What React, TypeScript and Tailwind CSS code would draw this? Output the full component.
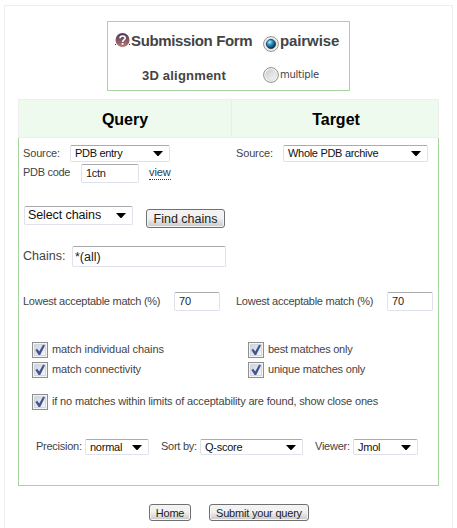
import React from "react";

type BoxProps = { className?: string; children?: React.ReactNode };

const frame = "border border-[#dfe2ec] border-t-[#a9abb0] rounded-[2px] bg-white shrink-0";

function Label({ className = "", children }: BoxProps) {
  return (
    <span className={`block shrink-0 whitespace-nowrap text-[11px] leading-[14px] text-[#444] ${className}`}>
      {children}
    </span>
  );
}

function Select({ className = "", children }: BoxProps) {
  return (
    <div className={`${frame} flex items-center justify-between pl-1 pr-[6px] whitespace-nowrap text-[#111] ${className}`}>
      <span>{children}</span>
      <svg width="10" height="5" viewBox="0 0 10 5" className="block">
        <path d="M0 0H10L5.5 5H4.5Z" fill="#000" />
      </svg>
    </div>
  );
}

function Field({ className = "", children }: BoxProps) {
  return <div className={`${frame} flex items-center pl-1 text-[#222] whitespace-nowrap ${className}`}>{children}</div>;
}

function Button({ className = "", children }: BoxProps) {
  return (
    <button
      className={`flex shrink-0 items-center justify-center whitespace-nowrap rounded-[3px] border border-[#707070] bg-linear-to-b from-[#f2f2f2] from-45% to-[#cfcfcf] to-90% pt-px text-[#222] shadow-[inset_0_0_0_1px_#f5f5f5] ${className}`}
    >
      {children}
    </button>
  );
}

function Check({ className = "", children }: BoxProps) {
  return (
    <div className={`flex h-4 ${className}`}>
      <svg width="16" height="16" viewBox="0 0 16 16" className="block shrink-0">
        <defs>
          <linearGradient id="checkFill" x1="0" y1="0" x2="1" y2="1">
            <stop offset="0" stopColor="#cdd2da" />
            <stop offset="1" stopColor="#f8f8f9" />
          </linearGradient>
        </defs>
        <rect x=".5" y=".5" width="15" height="15" fill="#f4f4f4" stroke="#8e8f8f" />
        <rect x="2.5" y="2.5" width="11" height="11" fill="url(#checkFill)" stroke="#d3d6da" />
        <path d="M3.4 8L5.2 6.8L7.2 9.4L11 2.8L13 3.2L8.2 13H6.6Z" fill="#3f5596" />
      </svg>
      <Label className="ml-1">{children}</Label>
    </div>
  );
}

function Radio({ checked = false }: { checked?: boolean }) {
  return (
    <svg width="16" height="16" viewBox="0 0 16 16" className="block shrink-0">
      <defs>
        <radialGradient id="radioOn" cx=".35" cy=".3" r=".7">
          <stop offset="0" stopColor="#b9efff" />
          <stop offset=".4" stopColor="#2b9bce" />
          <stop offset="1" stopColor="#0b2c48" />
        </radialGradient>
        <linearGradient id="radioOff" x1="0" y1="0" x2="1" y2="1">
          <stop offset="0" stopColor="#c9ccd0" />
          <stop offset="1" stopColor="#f7f7f7" />
        </linearGradient>
      </defs>
      <circle cx="8" cy="8" r="7.4" fill="#f5f5f5" stroke="#8e8f8f" />
      <circle cx="8" cy="8" r="5.4" fill="url(#radioOff)" stroke="#d5d7da" strokeWidth=".7" />
      {checked && <circle cx="8" cy="8" r="4.6" fill="url(#radioOn)" stroke="#1b3a55" strokeWidth=".8" />}
    </svg>
  );
}

function HelpIcon() {
  return (
    <svg width="16" height="15" viewBox="0 0 16 15" className="block shrink-0">
      <defs>
        <linearGradient id="help" x1="0" y1="0" x2="0" y2="1">
          <stop offset="0" stopColor="#51365c" />
          <stop offset="1" stopColor="#b27a70" />
        </linearGradient>
      </defs>
      <path d="M0 11.5h1M14 11.5h1" stroke="#333" />
      <circle cx="7.5" cy="7" r="7" fill="url(#help)" />
      <path d="M5 5.3C5 2.3 10.2 2.3 10.2 5C10.2 6.8 7.6 6.8 7.6 9" fill="none" stroke="#fff" strokeWidth="1.6" />
      <rect x="6.7" y="10" width="1.8" height="1.8" fill="#fff" />
    </svg>
  );
}

export default function App() {
  return (
    <div className="h-[528px] w-[457px] overflow-hidden bg-white pl-1 pt-[5px] font-['Liberation_Sans',Arial,sans-serif]">
      <main className="h-[540px] w-[449px] border border-[#eee]">
        <header className="ml-[102px] mt-[15px] h-[70px] w-[243px] border border-[#a8d6a0] font-bold text-[#444]">
          <div className="mt-[11px] flex h-[18px] pl-[7px]">
            <HelpIcon />
            <span className="block w-[132px] shrink-0 whitespace-nowrap text-[15px] leading-[16px] tracking-[-0.36px]">Submission Form</span>
            <div className="mt-[3px]"><Radio checked /></div>
            <span className="ml-[1px] block whitespace-nowrap text-[15px] leading-[16px] tracking-[-0.1px]">pairwise</span>
          </div>
          <div className="mt-[16px] flex h-4 pl-[34px]">
            <span className="block w-[121px] shrink-0 whitespace-nowrap text-[13px] leading-[17px] tracking-[0.2px]">3D alignment</span>
            <Radio />
            <span className="ml-[1px] block font-['DejaVu_Sans',sans-serif] text-[10px] font-normal leading-[15px] tracking-[-0.25px]">multiple</span>
          </div>
        </header>

        <section className="ml-[13px] mt-2 w-[421px]">
          <div className="flex h-[39px] border border-[#eeeeee] bg-[#eefaee] text-center text-base font-bold leading-[39px] text-black">
            <h2 className="w-[213px] border-r border-[#e8eee8]">Query</h2>
            <h2 className="w-[206px] pl-[2px]">Target</h2>
          </div>
          <div className="h-[348px] border border-t-0 border-[#a8d6a0] text-[11px]">
            <div className="flex h-[26px] pl-1 pt-[7px] tracking-[-0.3px]">
              <Label className="mt-px w-[47px] tracking-[-0.15px]">Source:</Label>
              <Select className="h-[17px] w-[100px]">PDB entry</Select>
              <Label className="ml-[66px] mt-px w-[47px] tracking-[-0.15px]">Source:</Label>
              <Select className="h-[17px] w-[145px]">Whole PDB archive</Select>
            </div>
            <div className="flex h-[19px] pl-1 tracking-[-0.3px]">
              <Label className="mt-px w-[58px]">PDB code</Label>
              <Field className="h-[19px] w-[58px]">1ctn</Field>
              <a className="ml-[10px] mt-px block h-[15px] border-b border-dotted border-[#333] leading-[14px] tracking-[-0.1px] text-[#233b5c]">view</a>
            </div>
            <div className="mt-[23px] flex pl-[5px] text-[12.5px]">
              <Select className="h-[19px] w-[109px] pl-[3px] tracking-[-0.1px]">Select chains</Select>
              <Button className="ml-[13px] mt-[3px] h-[19px] w-[79px]">Find chains</Button>
            </div>
            <div className="mt-[18px] flex pl-1 text-[12.5px]">
              <span className="mt-[2px] block w-[49px] shrink-0 leading-4 text-[#444]">Chains:</span>
              <Field className="h-[21px] w-[154px] pl-[2px] pt-px">*(all)</Field>
            </div>
            <div className="mt-[25px] flex pl-1">
              <Label className="mt-[2px] w-[151px] tracking-[-0.26px]">Lowest acceptable match (%)</Label>
              <Field className="h-[19px] w-[46px]">70</Field>
              <Label className="ml-4 mt-[2px] w-[151px] tracking-[-0.26px]">Lowest acceptable match (%)</Label>
              <Field className="h-[19px] w-[46px]">70</Field>
            </div>
            <div className="mt-[31px] grid grid-cols-[216px_1fr] gap-y-1 pl-[13px] tracking-[-0.08px]">
              <Check>match individual chains</Check>
              <Check className="tracking-[-0.25px]">best matches only</Check>
              <Check>match connectivity</Check>
              <Check className="tracking-[-0.2px]">unique matches only</Check>
            </div>
            <Check className="mt-4 pl-[13px] tracking-[-0.16px]">if no matches within limits of acceptability are found, show close ones</Check>
            <div className="mt-[29px] flex pl-[17px] tracking-[-0.25px]">
              <Label className="w-[49px]">Precision:</Label>
              <Select className="h-4 w-16">normal</Select>
              <Label className="ml-3 w-[39px]">Sort by:</Label>
              <Select className="h-4 w-[103px]">Q-score</Select>
              <Label className="ml-3 w-[38px]">Viewer:</Label>
              <Select className="h-4 w-[65px]">Jmol</Select>
            </div>
          </div>
        </section>
        <footer className="ml-[144px] mt-[18px] flex gap-[18px] text-[11px]">
          <Button className="h-[17px] w-[42px] tracking-[-0.2px]">Home</Button>
          <Button className="h-[17px] w-[100px] tracking-[-0.2px]">Submit your query</Button>
        </footer>
      </main>
    </div>
  );
}
